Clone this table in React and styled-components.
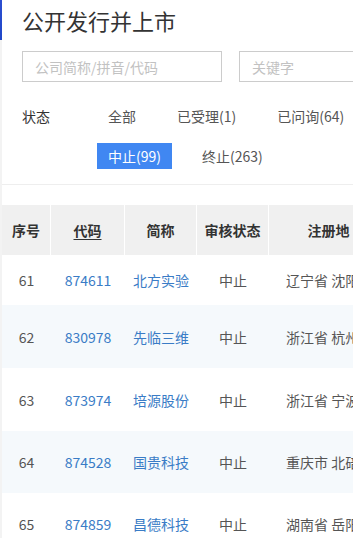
import React from "react";
import styled, { createGlobalStyle } from "styled-components";

const Global = createGlobalStyle`
  html, body { margin: 0; padding: 0; overflow: hidden; background: #fff; }
  body { font-family: "Noto Sans CJK SC", "Noto Sans", sans-serif; color: #333; }
  * { box-sizing: border-box; }
`;

const Page = styled.div`
  width: 353px;
  height: 538px;
  display: flex;
  overflow: hidden;
`;

const Rail = styled.div`
  width: 2px;
  flex-shrink: 0;
  display: flex;
  flex-direction: column;
  background: #f3f3f3;
`;

const RailMark = styled.div`
  height: 40px;
  background: linear-gradient(180deg, #2d4fd0, #1f47c9);
`;

const Main = styled.div`
  flex: 1;
  min-width: 0;
  overflow: hidden;
  display: flex;
  flex-direction: column;
`;

const Head = styled.div`
  padding: 4px 0 0 20px;
`;

const Title = styled.h1`
  margin: 0;
  font-size: 22px;
  font-weight: 400;
  line-height: 32px;
  color: #333;
  white-space: nowrap;
`;

const SearchRow = styled.div`
  display: flex;
  gap: 17px;
  margin-top: 15px;
`;

const SearchBox = styled.div`
  flex-shrink: 0;
  width: 200px;
  height: 31px;
  border: 1px solid #ccc;
  padding-left: 12px;
  display: flex;
  align-items: center;
  font-size: 14px;
  color: #c2c2c2;
  white-space: nowrap;
`;

const StatusArea = styled.div`
  display: flex;
  margin-top: 21px;
`;

const StatusLabel = styled.div`
  width: 75px;
  flex-shrink: 0;
  height: 26px;
  line-height: 26px;
  font-size: 14px;
  color: #333;
`;

const Options = styled.div`
  width: 300px;
  flex-shrink: 0;
  display: flex;
  flex-wrap: wrap;
  column-gap: 19px;
  row-gap: 14px;
`;

const Option = styled.div`
  height: 26px;
  padding: 0 11px;
  line-height: 26px;
  font-size: 14px;
  white-space: nowrap;
  color: ${(p) => (p.$active ? "#fff" : "#555")};
  background: ${(p) => (p.$active ? "#4087f2" : "transparent")};
`;

const Divider = styled.div`
  height: 1px;
  background: #eeeeee;
  margin-top: 15px;
  width: 400px;
  flex-shrink: 0;
`;

const Table = styled.div`
  margin-top: 20px;
  width: 387px;
  flex-shrink: 0;
`;

const Row = styled.div`
  display: grid;
  grid-template-columns: 49px 74px 72px 72px 120px;
  height: ${(p) => p.$h}px;
  background: ${(p) => p.$bg};
`;

const HeadCell = styled.div`
  display: flex;
  align-items: center;
  justify-content: center;
  border-right: 1px solid #fff;
  font-size: 14px;
  font-weight: 700;
  color: #333;
  white-space: nowrap;
  text-decoration: ${(p) => (p.$underline ? "underline" : "none")};
  text-underline-offset: 3px;
`;

const Cell = styled.div`
  display: flex;
  align-items: center;
  justify-content: ${(p) => (p.$left ? "flex-start" : "center")};
  padding-left: ${(p) => p.$pl || 0}px;
  font-size: 14px;
  white-space: nowrap;
  overflow: hidden;
  color: ${(p) => (p.$link ? "#3a7cc6" : "#555")};
`;

const rows = [
  { n: 61, code: "874611", name: "北方实验", place: "辽宁省 沈阳市", h: 50 },
  { n: 62, code: "830978", name: "先临三维", place: "浙江省 杭州市", h: 63 },
  { n: 63, code: "873974", name: "培源股份", place: "浙江省 宁波市", h: 63 },
  { n: 64, code: "874528", name: "国贵科技", place: "重庆市 北碚区", h: 62 },
  { n: 65, code: "874859", name: "昌德科技", place: "湖南省 岳阳市", h: 62 },
];

export default function App() {
  return (
    <>
      <Global />
      <Page>
        <Rail>
          <RailMark />
        </Rail>
        <Main>
          <Head>
            <Title>公开发行并上市</Title>
            <SearchRow>
              <SearchBox>公司简称/拼音/代码</SearchBox>
              <SearchBox>关键字</SearchBox>
            </SearchRow>
            <StatusArea>
              <StatusLabel>状态</StatusLabel>
              <Options>
                <Option>全部</Option>
                <Option>已受理(1)</Option>
                <Option>已问询(64)</Option>
                <Option $active>中止(99)</Option>
                <Option>终止(263)</Option>
              </Options>
            </StatusArea>
          </Head>
          <Divider />
          <Table>
            <Row $h={50} $bg="#f0f0f0">
              <HeadCell>序号</HeadCell>
              <HeadCell $underline>代码</HeadCell>
              <HeadCell>简称</HeadCell>
              <HeadCell>审核状态</HeadCell>
              <HeadCell>注册地</HeadCell>
            </Row>
            {rows.map((r, i) => (
              <Row key={r.n} $h={r.h} $bg={i % 2 === 1 ? "#f5f9fc" : "#fff"}>
                <Cell>{r.n}</Cell>
                <Cell $link>{r.code}</Cell>
                <Cell $link>{r.name}</Cell>
                <Cell>中止</Cell>
                <Cell $left $pl={17}>{r.place}</Cell>
              </Row>
            ))}
          </Table>
        </Main>
      </Page>
    </>
  );
}
